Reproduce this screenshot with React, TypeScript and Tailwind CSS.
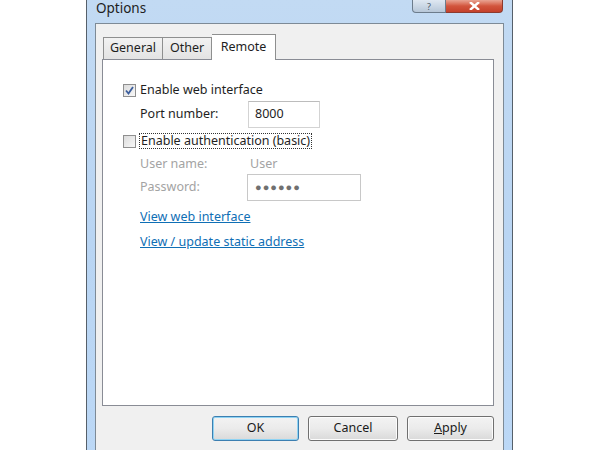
import React from 'react'

const font = { fontFamily: '"Noto Sans", "Open Sans", sans-serif' }

function Checkbox({ checked }: { checked?: boolean }) {
  return (
    <div className="w-[13px] h-[13px] border border-[#8f8f8f] bg-gradient-to-br from-[#dcdcdc] to-[#f8f8f8] flex items-center justify-center shrink-0">
      {checked && (
        <svg width="9" height="9" viewBox="0 0 9 9">
          <path d="M1 4.5 L3.5 7.5 L8 1" fill="none" stroke="#3b5d9c" strokeWidth="1.8" />
        </svg>
      )}
    </div>
  )
}

function Button({ label, primary, accel, wide }: { label: string; primary?: boolean; accel?: boolean; wide?: boolean }) {
  return (
    <div
      className={
        (wide ? 'w-[90px] ' : 'w-[87px] ') +
        'h-[25px] rounded-[3px] flex items-center justify-center text-[12.5px] text-[#1a1a1a] bg-gradient-to-b from-[#f3f3f3] via-[#ebebeb] to-[#d9d9d9] ' +
        (primary ? 'border border-[#3c7fb1] shadow-[inset_0_0_0_1px_#8fd3f3]' : 'border border-[#707070] shadow-[inset_0_0_0_1px_#fcfcfc]')
      }
    >
      {accel ? (
        <span>
          <span className="underline">A</span>pply
        </span>
      ) : (
        label
      )}
    </div>
  )
}

export default function App() {
  return (
    <div className="w-[600px] h-[450px] bg-white overflow-hidden" style={font}>
      <div className="ml-[86px] w-[427px] h-[470px] border-x border-[#56606a] bg-gradient-to-b from-[#c2daf3] via-[#b9d5f3] to-[#bcd8f6] flex flex-col">
        {/* Title bar */}
        <div className="h-[23px] flex items-start justify-between pl-[9px] pr-[9px]">
          <span className="text-[13.5px] leading-[16px] text-[#1e1e1e]">Options</span>
          <div className="flex">
            <div className="w-[34px] h-[13px] rounded-bl-[4px] border border-t-0 border-[#6c7c8c] bg-gradient-to-b from-[#dfe8f2] to-[#b7c7d8] flex items-end justify-center text-[9px] text-[#4b5a6a] leading-[11px]">
              ?
            </div>
            <div className="w-[57px] h-[13px] rounded-br-[4px] border border-t-0 border-l-0 border-[#8c3a2e] bg-gradient-to-b from-[#e8a493] via-[#d2553d] to-[#c4402a] flex items-end justify-center pb-[2px]">
              <svg width="11" height="8" viewBox="0 0 11 8">
                <path d="M1 0 L10 8 M10 0 L1 8" stroke="white" strokeWidth="2.4" />
              </svg>
            </div>
          </div>
        </div>
        {/* Body */}
        <div className="mx-[8px] flex-1 border border-[#7d8a96] border-b-0 bg-[#f0f0f0] pl-[6px] pr-[9px] pt-[9px] flex flex-col">
          {/* Tabs */}
          <div className="flex items-end h-[26px] pl-[1px]">
            <div className="h-[22px] w-[60px] border border-b-0 border-[#8e8f8f] bg-gradient-to-b from-[#f2f2f2] to-[#e3e3e3] flex items-center justify-center text-[12.5px] text-[#1e1e1e]">
              General
            </div>
            <div className="h-[22px] w-[49px] border border-b-0 border-l-0 border-[#8e8f8f] bg-gradient-to-b from-[#f2f2f2] to-[#e3e3e3] flex items-center justify-center text-[12.5px] text-[#1e1e1e]">
              Other
            </div>
            <div className="h-[26px] w-[64px] -mb-px relative border border-b-0 border-l-0 border-[#8e8f8f] bg-white flex items-start pt-[3px] justify-center text-[12.5px] text-[#1e1e1e]">
              Remote
            </div>
          </div>
          {/* Panel */}
          <div className="h-[347px] border border-[#898c95] bg-white pl-[20px] pt-[23px] text-[12.5px] text-[#1e1e1e]">
            <div className="flex items-center gap-[4px] h-[15px]">
              <Checkbox checked />
              <span>Enable web interface</span>
            </div>
            <div className="flex items-center mt-[3px] pl-[17px]">
              <span className="w-[108px]">Port number:</span>
              <div className="w-[72px] h-[27px] border border-[#d3d3d3] border-t-[#bcbcbc] flex items-center pl-[6px]">8000</div>
            </div>
            <div className="flex items-center gap-[4px] mt-[5px] h-[16px]">
              <Checkbox />
              <span className="border border-dotted border-[#333] px-[1px] leading-[14px] -ml-[1px]">Enable authentication (basic)</span>
            </div>
            <div className="pl-[17px] text-[#a3a3a3]">
              <div className="flex items-center mt-[7px] h-[17px]">
                <span className="w-[110px]">User name:</span>
                <span>User</span>
              </div>
              <div className="flex items-center mt-[1px]">
                <span className="w-[107px]">Password:</span>
                <div className="w-[114px] h-[27px] border border-[#c8c8c8] flex items-center pl-[7px] text-[#707070] text-[11px] tracking-[1px]">
                  ●●●●●●
                </div>
              </div>
              <div className="mt-[7px] text-[#0f6fb5] underline h-[17px] leading-[17px]">View web interface</div>
              <div className="mt-[8px] text-[#0f6fb5] underline h-[17px] leading-[17px]">View / update static address</div>
            </div>
          </div>
          {/* Buttons */}
          <div className="flex justify-end gap-[9px] mt-[10px]">
            <Button label="OK" primary />
            <Button label="Cancel" wide />
            <Button label="Apply" accel />
          </div>
        </div>
      </div>
    </div>
  )
}
